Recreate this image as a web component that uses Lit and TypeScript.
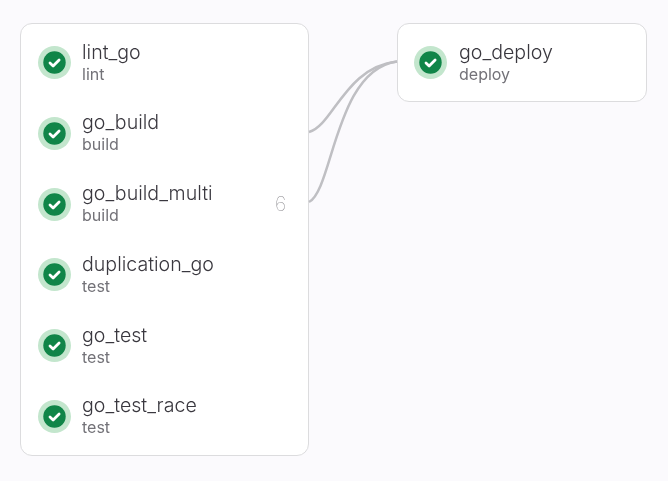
import { LitElement, html, css, svg } from "lit";
import { customElement } from "lit/decorators.js";

const stage1 = [
  ["lint_go", "lint", ""],
  ["go_build", "build", ""],
  ["go_build_multi", "build", "6"],
  ["duplication_go", "test", ""],
  ["go_test", "test", ""],
  ["go_test_race", "test", ""],
];

@customElement("app-root")
export class AppRoot extends LitElement {
  static styles = css`
    :host {
      display: block;
      position: relative;
      width: 668px;
      height: 481px;
      background: #fbfafd;
      overflow: hidden;
      font-family: Inter, "Noto Sans", sans-serif;
    }
    .graph {
      display: flex;
      align-items: flex-start;
      gap: 88px;
      padding: 23px 0 0 20px;
    }
    .card {
      box-sizing: border-box;
      background: #fff;
      border: 1px solid #dcdcde;
      border-radius: 12px;
      padding: 16px 22px 16px 17px;
      display: flex;
      flex-direction: column;
      gap: 25.8px;
    }
    .first { width: 289px; }
    .second { width: 250px; padding-left: 16px; }
    .second .halo { margin-right: 12px; }
    .row {
      display: flex;
      align-items: center;
      height: 45px;
    }
    .halo {
      width: 33px;
      height: 33px;
      flex: none;
      margin-right: 11px;
    }
    .text {
      display: flex;
      flex-direction: column;
      flex: 1;
      will-change: transform;
    }
    .name {
      font-size: 19.6px;
      line-height: 23px;
      font-weight: 350;
      color: #3a383f;
    }
    .sub {
      font-size: 16px;
      line-height: 21px;
      color: #737278;
    }
    .count {
      font-size: 20px;
      font-weight: 100;
      color: #89888d;
      will-change: transform;
    }
    .links {
      position: absolute;
      inset: 0;
      pointer-events: none;
    }
    .links path {
      fill: none;
      stroke: #bfbfc3;
      stroke-width: 2.5;
    }
  `;

  private icon() {
    return html`<svg class="halo" viewBox="0 0 33 33" aria-hidden="true">
      <circle cx="16.5" cy="16.5" r="16.5" fill="#c3e6cd"></circle>
      <circle cx="16.5" cy="16.5" r="11.2" fill="#108548"></circle>
      <path d="M12 17l3.1 2.9 6-6" fill="none" stroke="#fff" stroke-width="2.8" stroke-linecap="round" stroke-linejoin="round"></path>
    </svg>`;
  }

  private row(name: string, sub: string, count = "") {
    return html`<div class="row">
      ${this.icon()}
      <div class="text"><span class="name">${name}</span><span class="sub">${sub}</span></div>
      ${count ? html`<span class="count">${count}</span>` : ""}
    </div>`;
  }

  render() {
    return html`
      <div class="graph">
        <div class="card first">${stage1.map(([n, s, c]) => this.row(n, s, c))}</div>
        <div class="card second">${this.row("go_deploy", "deploy")}</div>
      </div>
      <svg class="links" width="668" height="481" aria-hidden="true">
        ${svg`<path d="M309 132C333 126 345 67 397 61.5"></path>
        <path d="M309 202C333 190 335 70 397 61.5"></path>`}
      </svg>
    `;
  }
}
